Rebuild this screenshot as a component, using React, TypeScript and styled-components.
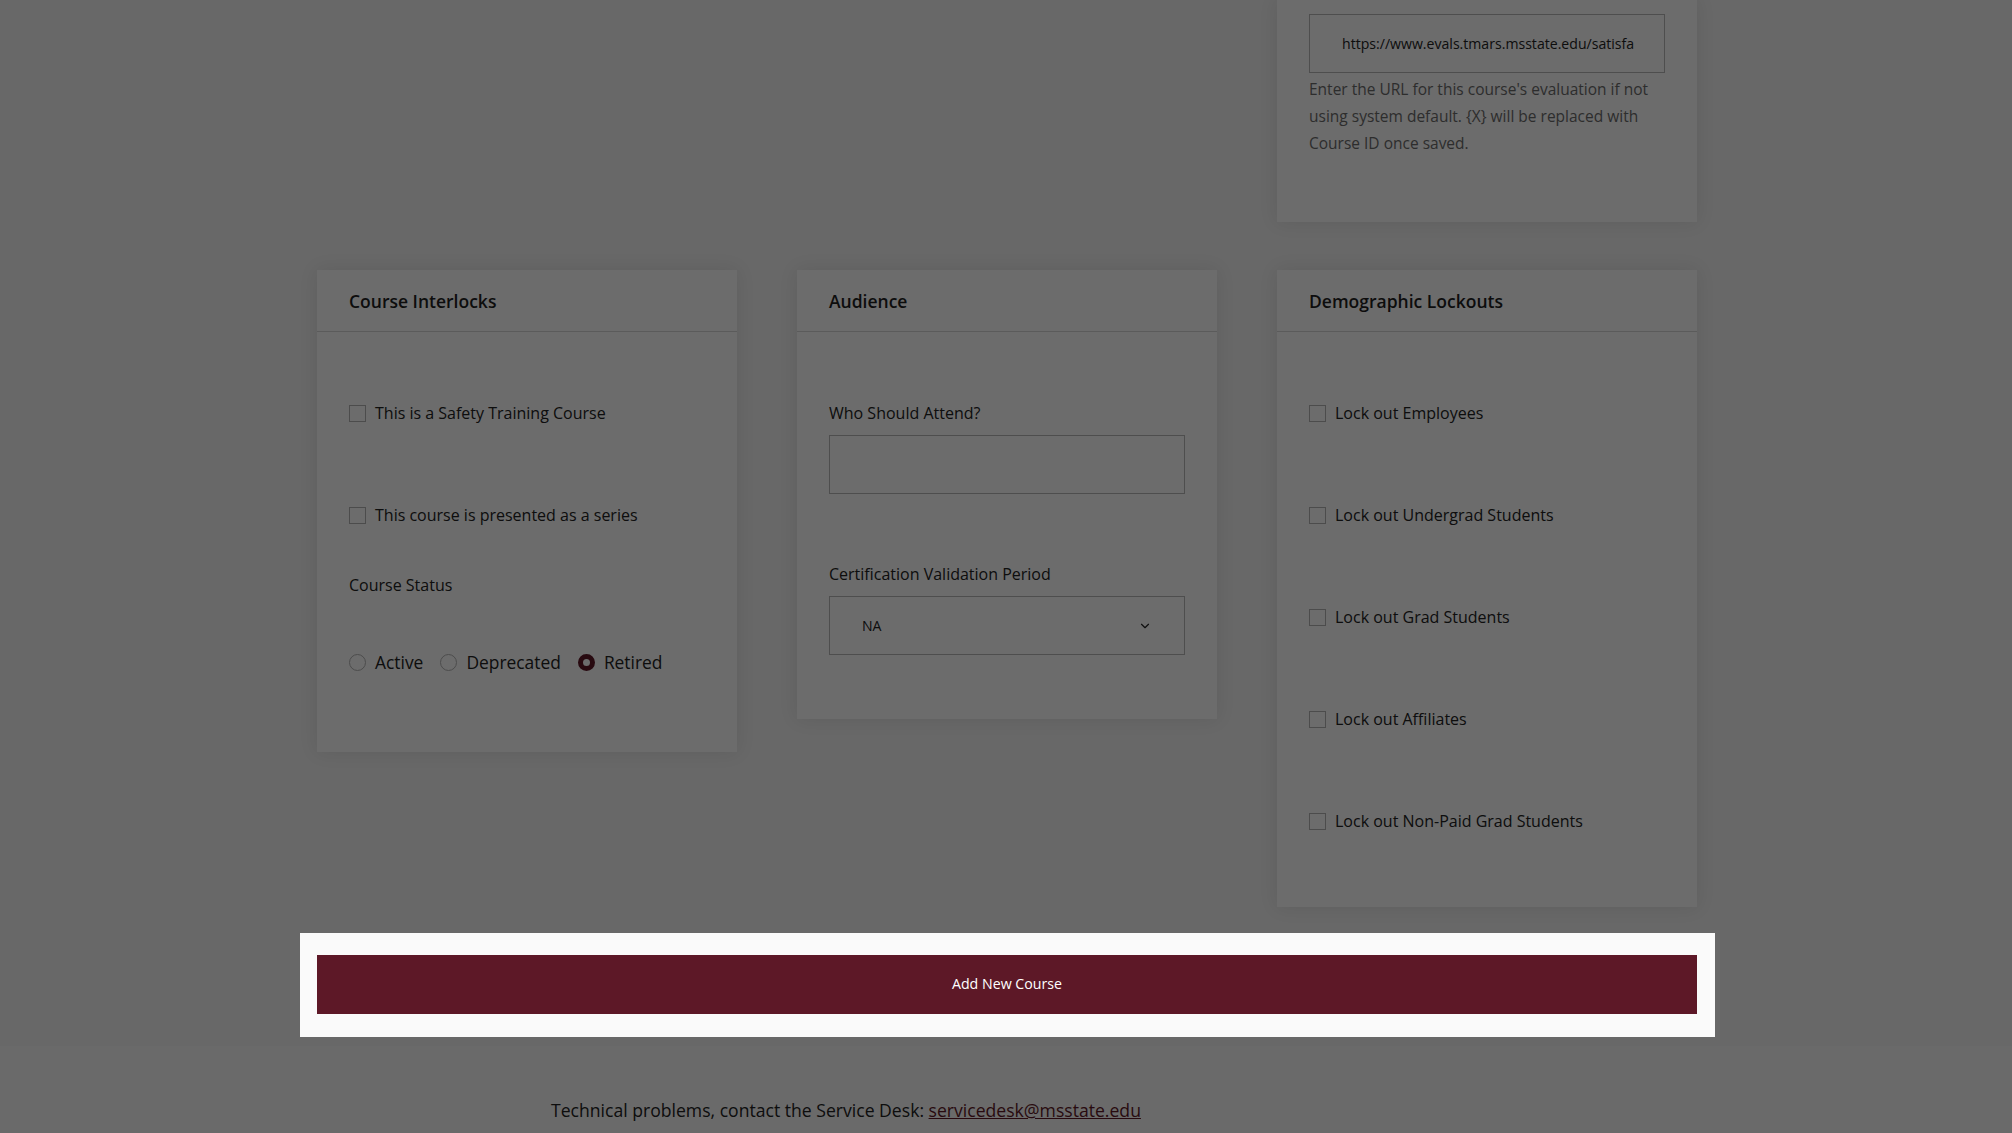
import React from "react";
import styled, { createGlobalStyle } from "styled-components";
import { ChevronDown } from "lucide-react";

const GlobalStyle = createGlobalStyle`
  html, body {
    margin: 0;
    padding: 0;
  }
  body {
    background: #f0f0f0;
    font-family: "Open Sans", "Noto Sans", "Liberation Sans", sans-serif;
    color: #222;
  }
  * { box-sizing: border-box; }
`;

const maroon = "#5d1827";

const Overlay = styled.div`
  position: fixed;
  inset: 0;
  background: rgba(0, 0, 0, 0.57);
  z-index: 1;
  pointer-events: none;
`;

const Main = styled.main`
  width: 1380px;
  margin: 0 0 0 calc(50% - 689px);
`;

const Row = styled.div<{ $mt?: number }>`
  display: grid;
  grid-template-columns: repeat(3, 420px);
  column-gap: 60px;
  align-items: start;
  margin-top: ${(p) => p.$mt ?? 0}px;
`;

const Card = styled.section<{ $col?: number }>`
  background: #fafafa;
  box-shadow: 0 0 18px rgba(0, 0, 0, 0.09);
  grid-column: ${(p) => p.$col ?? "auto"};
`;

const CardHeader = styled.header`
  height: 62px;
  display: flex;
  align-items: center;
  padding: 0 32px;
  border-bottom: 1px solid #d3d3d3;
  font-size: 17.5px;
  font-weight: 600;
  color: #1e1e1e;
`;

const CardBody = styled.div<{ $pt: number; $pb: number }>`
  display: flex;
  flex-direction: column;
  padding: ${(p) => p.$pt}px 32px ${(p) => p.$pb}px;
`;

const Label = styled.div<{ $mt?: number }>`
  font-size: 16px;
  line-height: 24px;
  height: 24px;
  color: #222;
  margin-top: ${(p) => p.$mt ?? 0}px;
`;

const TextBox = styled.div<{ $mt?: number }>`
  height: 59px;
  border: 1px solid #b4b4b4;
  background: #fafafa;
  display: flex;
  align-items: center;
  justify-content: space-between;
  padding: 0 32px;
  font-size: 14.1px;
  color: #222;
  margin-top: ${(p) => p.$mt ?? 0}px;
  white-space: nowrap;
  overflow: hidden;
`;

const Help = styled.p`
  margin: 3px 0 0;
  font-size: 15.5px;
  line-height: 27px;
  color: #6a6a6a;
`;

const CheckRow = styled.label<{ $mt?: number }>`
  display: flex;
  align-items: center;
  gap: 9px;
  height: 24px;
  font-size: 16px;
  color: #222;
  margin-top: ${(p) => p.$mt ?? 0}px;
`;

const Box = styled.span`
  width: 17px;
  height: 17px;
  border: 1px solid #b0b0b0;
  background: #fafafa;
  flex-shrink: 0;
`;

const RadioGroup = styled.div<{ $mt?: number }>`
  display: flex;
  align-items: center;
  gap: 17px;
  height: 24px;
  margin-top: ${(p) => p.$mt ?? 0}px;
`;

const RadioOption = styled.label`
  display: flex;
  align-items: center;
  gap: 9px;
  font-size: 17.4px;
  color: #222;
`;

const Dot = styled.span<{ $on?: boolean }>`
  width: 17px;
  height: 17px;
  border-radius: 50%;
  border: ${(p) => (p.$on ? `5px solid ${maroon}` : "1px solid #b0b0b0")};
  background: #fafafa;
  flex-shrink: 0;
`;

const ActionBar = styled.div`
  position: relative;
  z-index: 2;
  width: 1415px;
  margin: 26px 0 0 calc(50% - 706px);
  padding: 22px 18px 23px 17px;
  background: #fafafa;
`;

const SubmitButton = styled.button`
  display: block;
  width: 100%;
  height: 59px;
  padding: 0 0 2px;
  border: none;
  background: ${maroon};
  color: #fff;
  font-family: inherit;
  font-size: 14.2px;
  font-weight: 500;
`;

const Footer = styled.footer`
  margin-top: 9px;
  background: #f5f5f5;
  padding: 51px 0 30px 551px;
  font-size: 17.6px;
  line-height: 26px;
  color: #222;
  a {
    color: ${maroon};
  }
`;

function Check({ text, mt }: { text: string; mt?: number }) {
  return (
    <CheckRow $mt={mt}>
      <Box />
      {text}
    </CheckRow>
  );
}

const lockouts = [
  "Lock out Employees",
  "Lock out Undergrad Students",
  "Lock out Grad Students",
  "Lock out Affiliates",
  "Lock out Non-Paid Grad Students",
];

export default function App() {
  return (
    <>
      <GlobalStyle />
      <Main>
        <Row>
          <Card $col={3}>
            <CardBody $pt={14} $pb={65}>
              <TextBox>https://www.evals.tmars.msstate.edu/satisfa</TextBox>
              <Help>
                Enter the URL for this course's evaluation if not using system default. {"{X}"} will be replaced with
                Course ID once saved.
              </Help>
            </CardBody>
          </Card>
        </Row>
        <Row $mt={48}>
          <Card>
            <CardHeader>Course Interlocks</CardHeader>
            <CardBody $pt={69} $pb={78}>
              <Check text="This is a Safety Training Course" />
              <Check text="This course is presented as a series" mt={78} />
              <Label $mt={46}>Course Status</Label>
              <RadioGroup $mt={53}>
                <RadioOption>
                  <Dot />
                  Active
                </RadioOption>
                <RadioOption>
                  <Dot />
                  Deprecated
                </RadioOption>
                <RadioOption>
                  <Dot $on />
                  Retired
                </RadioOption>
              </RadioGroup>
            </CardBody>
          </Card>
          <Card>
            <CardHeader>Audience</CardHeader>
            <CardBody $pt={69} $pb={64}>
              <Label>Who Should Attend?</Label>
              <TextBox $mt={10} />
              <Label $mt={68}>Certification Validation Period</Label>
              <TextBox $mt={10}>
                NA
                <ChevronDown size={14} strokeWidth={2} />
              </TextBox>
            </CardBody>
          </Card>
          <Card>
            <CardHeader>Demographic Lockouts</CardHeader>
            <CardBody $pt={69} $pb={74}>
              {lockouts.map((t, i) => (
                <Check key={t} text={t} mt={i === 0 ? 0 : 78} />
              ))}
            </CardBody>
          </Card>
        </Row>
      </Main>
      <ActionBar>
        <SubmitButton>Add New Course</SubmitButton>
      </ActionBar>
      <Footer>
        Technical problems, contact the Service Desk: <a href="#">servicedesk@msstate.edu</a>
      </Footer>
      <Overlay />
    </>
  );
}
